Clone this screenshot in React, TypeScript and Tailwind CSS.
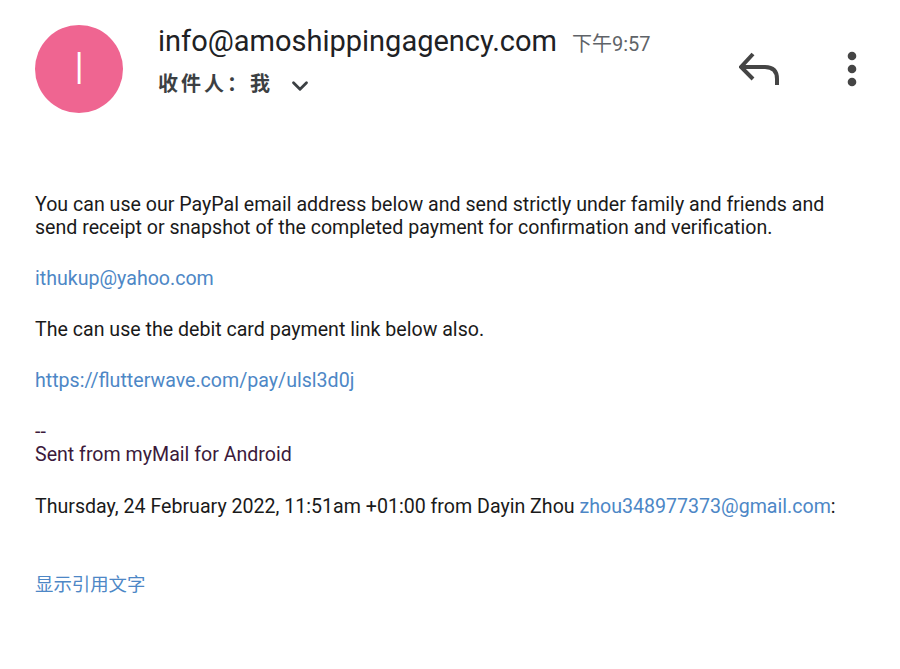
import { ChevronDown } from "lucide-react"

function App() {
    return (
        <div className="w-[900px] h-[669px] bg-white overflow-hidden" style={{ fontFamily: "Roboto, 'Noto Sans CJK SC', sans-serif" }}>
            <div className="flex items-start pt-[25px] pl-[35px]">
                <div className="w-[88px] h-[88px] rounded-full bg-[#ef6591] flex items-center justify-center">
                    <span className="text-white text-[44px] font-light leading-none">I</span>
                </div>
                <div className="ml-[35px] mt-[1px] flex flex-col">
                    <div className="flex items-baseline">
                        <span className="text-[29px] text-[#202124] leading-[30px]">info@amoshippingagency.com</span>
                        <span className="ml-[15px] text-[20px] text-[#5f6368]">下午9:57</span>
                    </div>
                    <div className="flex items-center mt-[8px]">
                        <span className="text-[20px] text-[#3c4043] font-semibold tracking-[3px]" style={{ fontFamily: "'Noto Sans CJK SC', sans-serif" }}>收件人：我</span>
                        <ChevronDown className="ml-[14px] mt-[6px] w-[26px] h-[26px] text-[#3c4043]" strokeWidth={2.6} />
                    </div>
                </div>
                <div className="ml-auto mr-[42px] mt-[25px] flex items-start gap-[67px]">
                    <svg width="40" height="40" viewBox="0 0 40 40" className="text-[#454545]">
                        <path d="M14 4 L2 17 L14 29 M2 17 H26 Q38 17 38 29 V35" fill="none" stroke="currentColor" strokeWidth="4" strokeLinejoin="miter" />
                    </svg>
                    <svg width="12" height="40" viewBox="0 0 12 40" className="text-[#454545]">
                        <circle cx="6" cy="6" r="4.3" fill="currentColor" />
                        <circle cx="6" cy="19" r="4.3" fill="currentColor" />
                        <circle cx="6" cy="32" r="4.3" fill="currentColor" />
                    </svg>
                </div>
            </div>

            <div className="pl-[35px] w-[845px] mt-[80px] text-[19.6px] leading-[23px] text-[#1a1a1a]">
                <p>You can use our PayPal email address below and send strictly under family and friends and send receipt or snapshot of the completed payment for confirmation and verification.</p>
                <p className="mt-[28px] text-[#4d87c6]">ithukup@yahoo.com</p>
                <p className="mt-[28px]">The can use the debit card payment link below also.</p>
                <p className="mt-[28px] text-[#4d87c6]">https://flutterwave.com/pay/ulsl3d0j</p>
                <p className="mt-[28px] text-[#3b1a3b]">--</p>
                <p className="text-[#3b1a3b]">Sent from myMail for Android</p>
                <p className="mt-[29px]">Thursday, 24 February 2022, 11:51am +01:00 from Dayin Zhou <span className="text-[#4d87c6]">zhou348977373@gmail.com</span>:</p>
                <p className="mt-[54px] text-[18.4px] text-[#4d87c6]" style={{ fontFamily: "'Noto Sans CJK SC', sans-serif" }}>显示引用文字</p>
            </div>
        </div>
    )
}

export default App
